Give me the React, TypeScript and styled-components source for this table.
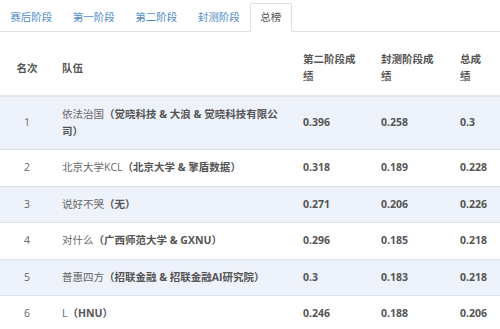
import React from 'react'
import styled, { createGlobalStyle } from 'styled-components'

const GlobalStyle = createGlobalStyle`
  html, body {
    margin: 0;
    padding: 0;
    background: #fff;
  }
  body {
    font-family: 'Open Sans', 'Noto Sans CJK SC', sans-serif;
    font-size: 10.5px;
    color: #666;
  }
`

const STabBar = styled.ul`
  display: flex;
  list-style: none;
  margin: 0;
  padding: 3px 0 0;
  border-bottom: 1px solid #e0e0e0;
`

const STab = styled.li<{ $active?: boolean }>`
  box-sizing: border-box;
  height: 29px;
  margin-bottom: -1px;
  padding: 0 9.25px;
  display: flex;
  align-items: center;
  border: 1px solid ${(p) => (p.$active ? '#e0e0e0' : 'transparent')};
  border-bottom-color: ${(p) => (p.$active ? '#fff' : 'transparent')};
  border-radius: 2px 2px 0 0;
  background: ${(p) => (p.$active ? '#fff' : 'transparent')};
  color: ${(p) => (p.$active ? '#555' : '#4f8bc9')};
  line-height: 17px;
  white-space: nowrap;
`

const STable = styled.table`
  width: 100%;
  margin-top: 10px;
  table-layout: fixed;
  border-collapse: collapse;
  border-spacing: 0;
  line-height: 17px;
`

const SHeadCell = styled.th<{ $center?: boolean; $score?: boolean }>`
  padding: 9.25px ${(p) => (p.$score ? '10px' : '8px')} 9.25px 8px;
  text-align: ${(p) => (p.$center ? 'center' : 'left')};
  vertical-align: middle;
  font-weight: 700;
  color: #555;
  border-bottom: 2px solid #e4e6ea;
`

const SRow = styled.tr<{ $striped?: boolean }>`
  background: ${(p) => (p.$striped ? '#eef2fa' : '#fff')};
  border-top: 1px solid #dbe3f0;

  &:first-child {
    border-top: none;
  }
`

const SCell = styled.td<{ $center?: boolean; $bold?: boolean }>`
  padding: 9.25px 8px;
  vertical-align: middle;
  text-align: ${(p) => (p.$center ? 'center' : 'left')};
  font-weight: ${(p) => (p.$bold ? 700 : 400)};
  color: ${(p) => (p.$bold ? '#555' : '#666')};
`

const SOrg = styled.b`
  font-weight: 700;
  color: #555;
`

const TABS = ['赛后阶段', '第一阶段', '第二阶段', '封测阶段', '总榜']

const ROWS = [
  { rank: 1, team: '依法治国', org: '觉晓科技 & 大浪 & 觉晓科技有限公司', s2: '0.396', test: '0.258', total: '0.3' },
  { rank: 2, team: '北京大学KCL', org: '北京大学 & 擎盾数据', s2: '0.318', test: '0.189', total: '0.228' },
  { rank: 3, team: '说好不哭', org: '无', s2: '0.271', test: '0.206', total: '0.226' },
  { rank: 4, team: '对什么', org: '广西师范大学 & GXNU', s2: '0.296', test: '0.185', total: '0.218' },
  { rank: 5, team: '普惠四方', org: '招联金融 & 招联金融AI研究院', s2: '0.3', test: '0.183', total: '0.218' },
  { rank: 6, team: 'L', org: 'HNU', s2: '0.246', test: '0.188', total: '0.206' },
]

export default function App(): React.ReactElement {
  return (
    <>
      <GlobalStyle />
      <STabBar>
        {TABS.map((tab) => (
          <STab key={tab} $active={tab === '总榜'}>
            {tab}
          </STab>
        ))}
      </STabBar>
      <STable>
        <colgroup>
          <col style={{ width: 54 }} />
          <col style={{ width: 241 }} />
          <col style={{ width: 78 }} />
          <col style={{ width: 79 }} />
          <col />
        </colgroup>
        <thead>
          <tr>
            <SHeadCell $center>名次</SHeadCell>
            <SHeadCell>队伍</SHeadCell>
            <SHeadCell $score>第二阶段成绩</SHeadCell>
            <SHeadCell $score>封测阶段成绩</SHeadCell>
            <SHeadCell $score>总成绩</SHeadCell>
          </tr>
        </thead>
        <tbody>
          {ROWS.map((row, i) => (
            <SRow key={row.rank} $striped={i % 2 === 0}>
              <SCell $center>{row.rank}</SCell>
              <SCell>
                {row.team}
                <SOrg>（{row.org}）</SOrg>
              </SCell>
              <SCell $bold>{row.s2}</SCell>
              <SCell $bold>{row.test}</SCell>
              <SCell $bold>{row.total}</SCell>
            </SRow>
          ))}
        </tbody>
      </STable>
    </>
  )
}
